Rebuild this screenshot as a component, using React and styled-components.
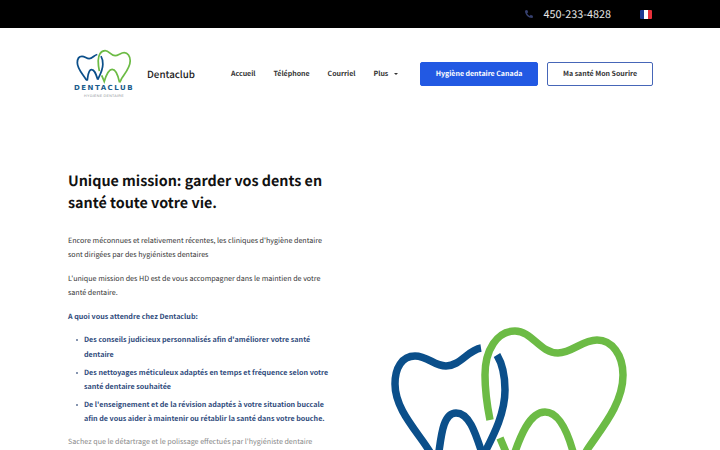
import React from "react";
import styled, { createGlobalStyle } from "styled-components";
import { FaPhoneAlt } from "react-icons/fa";

const SANS = `"Noto Sans CJK SC", "Noto Sans", sans-serif`;

const Global = createGlobalStyle`
  html, body { margin: 0; padding: 0; height: 450px; overflow: hidden; background: #fff; }
  body { font-family: ${SANS}; text-rendering: geometricPrecision; }
  * { box-sizing: border-box; }
`;

/* top bar */
const TopBar = styled.div`
  height: 28px;
  background: #000;
  display: flex;
  align-items: center;
  justify-content: flex-end;
  padding-right: 68px;
`;
const PhoneIcon = styled(FaPhoneAlt)`
  width: 8px;
  height: 8px;
  color: #36406f;
  margin-right: 11px;
`;
const PhoneNumber = styled.span`
  font-size: 10.8px;
  line-height: 28px;
  color: #e8e8e8;
  margin-right: 29px;
`;
const Flag = styled.div`
  width: 12px;
  height: 9px;
  display: flex;
  border-radius: 1px;
  overflow: hidden;
`;
const FlagBand = styled.span`
  flex: 1;
  background: ${(p) => p.$color};
`;

/* header */
const Header = styled.header`
  height: 92px;
  display: flex;
  align-items: center;
  padding: 0 67px 0 68px;
`;
const LogoBox = styled.div`
  width: 72px;
  height: 56px;
  margin-top: 4px;
  margin-right: 7px;
  display: flex;
  flex-direction: column;
  align-items: center;
`;
const LogoName = styled.div`
  font-family: "DejaVu Sans", sans-serif;
  font-weight: 700;
  font-size: 7px;
  line-height: 7px;
  letter-spacing: 1.5px;
  color: #1a5c8c;
  margin-top: -1px;
`;
const LogoSub = styled.div`
  font-family: "Liberation Sans", sans-serif;
  font-size: 3.6px;
  line-height: 5px;
  letter-spacing: 0.3px;
  color: #8a8f94;
  margin-top: 2px;
`;
const Brand = styled.div`
  font-size: 9.8px;
  font-weight: 500;
  line-height: 16px;
  color: #222;
  width: 84px;
`;
const Nav = styled.nav`
  display: flex;
  align-items: center;
  gap: 18px;
  flex: 1;
`;
const NavLink = styled.a`
  font-size: 7px;
  font-weight: 700;
  line-height: 14px;
  color: #333;
  display: flex;
  align-items: center;
`;
const Caret = styled.span`
  width: 0;
  height: 0;
  border-left: 2px solid transparent;
  border-right: 2px solid transparent;
  border-top: 2.5px solid #333;
  margin-left: 6px;
`;
const Actions = styled.div`
  display: flex;
  gap: 9px;
`;
const Button = styled.a`
  height: 24px;
  width: ${(p) => p.$width}px;
  border-radius: 2px;
  display: flex;
  align-items: center;
  justify-content: center;
  font-size: 7px;
  font-weight: 700;
  background: ${(p) => (p.$outline ? "#fff" : "#2259e3")};
  color: ${(p) => (p.$outline ? "#333" : "#fff")};
  border: ${(p) => (p.$outline ? "1.5px solid #4666b8" : "1px solid #2259e3")};
`;

/* content */
const Main = styled.main`
  display: flex;
  padding: 50px 0 0 68px;
`;
const Copy = styled.section`
  width: 264px;
  flex: none;
`;
const Title = styled.h1`
  margin: 0 0 19.5px;
  font-size: 14.3px;
  line-height: 22px;
  font-weight: 700;
  color: #111;
`;
const Para = styled.p`
  margin: 0 0 9.6px;
  font-size: 7.15px;
  line-height: 14.2px;
  color: ${(p) => p.$color || "#333"};
  font-weight: ${(p) => (p.$bold ? 700 : 400)};
`;
const List = styled.ul`
  margin: 0 0 8.5px;
  padding: 0 0 0 16px;
  list-style: none;
`;
const Item = styled.li`
  position: relative;
  margin-bottom: 4px;
  font-size: 7.15px;
  line-height: 14.2px;
  font-weight: 700;
  color: #2f4b7c;
  &::before {
    content: "";
    position: absolute;
    left: -8px;
    top: 6px;
    width: 2px;
    height: 2px;
    border-radius: 50%;
    background: #5f7396;
  }
`;
const Figure = styled.div`
  margin-left: 53px;
  padding-top: 150px;
`;
const TeethSvg = styled.svg`
  display: block;
  width: ${(p) => p.$width}px;
  flex: none;
`;

function Teeth({ width, ...rest }) {
  return (
    <TeethSvg $width={width} viewBox="385 320 250 165" fill="none" strokeWidth="7.5" {...rest}>
      <g stroke="#0b4f8a">
        <path d="M481 348C468 350 460 366 446 366C434 366 428 356 415 356C402 356 395 368 395 384C395 410 418 432 430 452C433 457 436 460 438 458C441 440 442 413 456 413C470 413 476 435 483 456" />
        <path d="M497 355C503 365 505 375 505 390C505 415 492 438 483 456" />
      </g>
      <g stroke="#6cbb45">
        <path d="M490 420C487 405 485 390 485 375C485 350 497 331 515 331C532 331 540 353 558 353C572 353 582 340 597 340C612 340 623 355 623 375C623 405 600 430 587 450C583 457 580 466 577 468" />
        <path d="M500 438L511 464C520 435 530 412 545 412C560 412 570 435 577 468" />
      </g>
    </TeethSvg>
  );
}

export default function App() {
  return (
    <>
      <Global />
      <TopBar>
        <PhoneIcon />
        <PhoneNumber>450-233-4828</PhoneNumber>
        <Flag>
          <FlagBand $color="#1f3a93" />
          <FlagBand $color="#fff" />
          <FlagBand $color="#e8303a" />
        </Flag>
      </TopBar>

      <Header>
        <LogoBox>
          <Teeth width={58} />
          <LogoName>DENTACLUB</LogoName>
          <LogoSub>HYGIÈNE DENTAIRE</LogoSub>
        </LogoBox>
        <Brand>Dentaclub</Brand>
        <Nav>
          <NavLink>Accueil</NavLink>
          <NavLink>Téléphone</NavLink>
          <NavLink>Courriel</NavLink>
          <NavLink>
            Plus
            <Caret />
          </NavLink>
        </Nav>
        <Actions>
          <Button $width={118}>Hygiène dentaire Canada</Button>
          <Button $width={106} $outline>
            Ma santé Mon Sourire
          </Button>
        </Actions>
      </Header>

      <Main>
        <Copy>
          <Title>Unique mission: garder vos dents en santé toute votre vie.</Title>
          <Para>
            Encore méconnues et relativement récentes, les cliniques d'hygiène dentaire sont
            dirigées par des hygiénistes dentaires
          </Para>
          <Para>
            L'unique mission des HD est de vous accompagner dans le maintien de votre santé
            dentaire.
          </Para>
          <Para $bold $color="#2f4b7c">
            A quoi vous attendre chez Dentaclub:
          </Para>
          <List>
            <Item>Des conseils judicieux personnalisés afin d'améliorer votre santé dentaire</Item>
            <Item>
              Des nettoyages méticuleux adaptés en temps et fréquence selon votre santé dentaire
              souhaitée
            </Item>
            <Item>
              De l'enseignement et de la révision adaptés à votre situation buccale afin de vous
              aider à maintenir ou rétablir la santé dans votre bouche.
            </Item>
          </List>
          <Para $color="#888">
            Sachez que le détartrage et le polissage effectués par l'hygiéniste dentaire
          </Para>
        </Copy>
        <Figure>
          <Teeth width={250} />
        </Figure>
      </Main>
    </>
  );
}
